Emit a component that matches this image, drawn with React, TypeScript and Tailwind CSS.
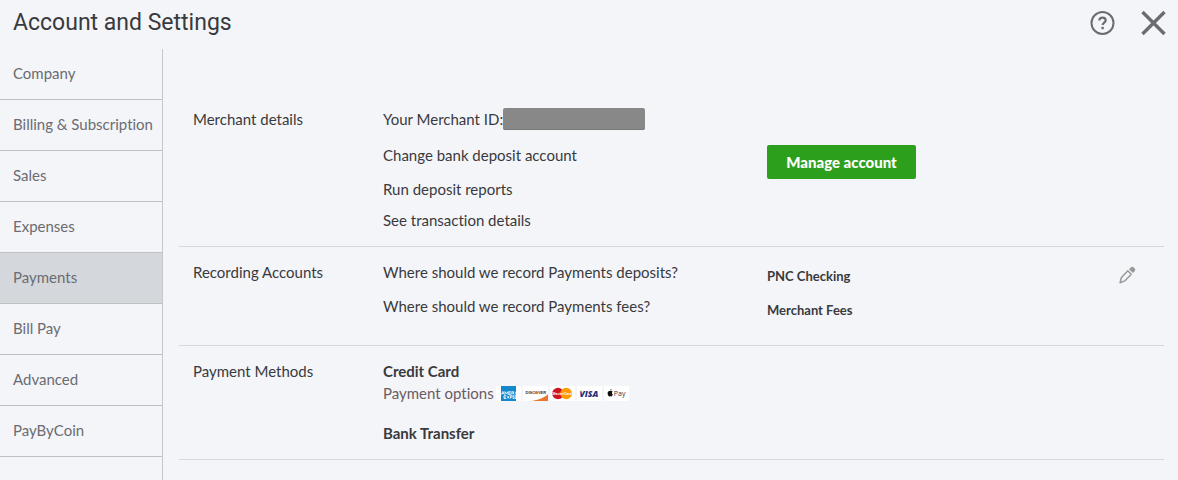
import { useState } from 'react';
import type { ReactNode } from 'react';

const TABS = [
  'Company',
  'Billing & Subscription',
  'Sales',
  'Expenses',
  'Payments',
  'Bill Pay',
  'Advanced',
  'PayByCoin',
];

function HelpIcon() {
  return (
    <svg width="26" height="26" viewBox="0 0 26 26" fill="none" stroke="currentColor" strokeWidth="2">
      <circle cx="13.5" cy="13" r="11" />
      <path d="M10.300 10.600c0-1.900 1.300-2.900 3.200-2.900s3.200 1.100 3.200 2.700c0 2.100-3.100 2.300-3.100 4.700" strokeWidth="2.200" />
      <path d="M12.400 16.800h2.400v2.400h-2.400z" fill="currentColor" stroke="none" />
    </svg>
  );
}

function CloseIcon() {
  return (
    <svg width="26" height="26" viewBox="0 0 26 26" fill="none" stroke="currentColor" strokeWidth="3.400">
      <path d="M2.500 2l22 22M24.500 2l-22 22" />
    </svg>
  );
}

function PencilIcon() {
  return (
    <svg width="18" height="18" viewBox="0 0 18 18" fill="none">
      <path d="M9.800 4.800l3.400 3.400-6.400 6.700-4.700 1.800 1.200-5z" stroke="currentColor" strokeWidth="1.500" strokeLinejoin="round" />
      <path d="M11 3.300l1.500-1.600a2.500 2.500 0 0 1 3.500 0l.4.400a2.500 2.500 0 0 1 0 3.500L14.900 7.100z" fill="currentColor" />
    </svg>
  );
}

function Card({ label, children }: { label: string; children: ReactNode }) {
  return (
    <svg width="25" height="15" viewBox="0 0 25 15" role="img" aria-label={label}>
      <rect width="25" height="15" rx="0.6" fill="#fff" />
      {children}
    </svg>
  );
}

function CardLogos() {
  return (
    <div className="flex gap-0.5">
      <Card label="American Express">
        <rect x="5" width="15" height="15" fill="#1488cc" />
        <g stroke="#fff" fill="none" strokeWidth="0.8">
          <path d="M5.4 8.6l1.5-3.2 1.5 3.2M6 7.6h1.8M9 8.6V5.6l1.4 2 1.4-2v3M15 5.7h-2.2v2.8H15M12.8 7.1h2M15.8 8.6V5.7h1.8v1.4h-1.8M17.4 7.1l.8 1.5M19.8 5.7v2.9" />
          <path d="M10.2 9.7H8v2.8h2.2M8 11.1h2M11 9.6l2.4 3M13.4 9.6l-2.4 3M14.4 12.6V9.7h1.5v1.5h-1.5M18.2 9.7h-1.4v1.4h1.4v1.4h-1.6M20 9.7h-1v1.4h1v1.4h-1" />
        </g>
      </Card>
      <Card label="Discover">
        <path d="M25 8.200V15H7.500C15 14 21 12 25 8.200z" fill="#e8762c" />
        <text x="2.500" y="8" fontSize="4" fontWeight="700" fill="#333" fontFamily="Liberation Sans, sans-serif">DISC</text>
        <circle cx="13.400" cy="6.600" r="1.700" fill="#e8762c" />
        <text x="14.900" y="8" fontSize="4" fontWeight="700" fill="#333" fontFamily="Liberation Sans, sans-serif">VER</text>
      </Card>
      <Card label="MasterCard">
        <circle cx="8" cy="7.500" r="5.800" fill="#cc1423" />
        <circle cx="16.200" cy="7.500" r="5.800" fill="#f90" />
        <text x="12" y="8.800" textAnchor="middle" fontSize="3.500" fontWeight="700" fontStyle="italic" fill="#fff" fontFamily="Liberation Sans, sans-serif">MasterCard</text>
      </Card>
      <Card label="Visa">
        <text x="2.500" y="10.900" fontSize="8.600" fontWeight="800" fontStyle="italic" fill="#262f7d" fontFamily="Open Sans, sans-serif">VISA</text>
        <path d="M2.600 4.800h2.200l.8 2.600z" fill="#e8a33c" />
      </Card>
      <Card label="Apple Pay">
        <path d="M8.900 8.600c-.5 1.300-1.200 2-1.900 1.800-.5-.2-.8-.2-1.300 0-.9.300-2.100-1.400-2.100-3.200 0-1.900 1.500-2.700 2.700-2.100.4.100.7-.2 1.200-.2.600 0 1 .3 1.300.7-1.200.9-1.100 2.400.1 3zM7.600 3c0 .9-.6 1.600-1.400 1.600C6.200 3.700 6.800 3.100 7.600 3z" fill="#111" />
        <text x="9.800" y="9.900" fontSize="7" fill="#333" fontFamily="Open Sans, sans-serif">Pay</text>
      </Card>
    </div>
  );
}

function Section({ title, className, children }: { title: string; className: string; children: ReactNode }) {
  return (
    <section className={`grid grid-cols-[190px_384px_1fr] border-b border-[#d6d8db] pl-3.5 ${className}`}>
      <h2>{title}</h2>
      {children}
    </section>
  );
}

export default function App() {
  const [active, setActive] = useState('Payments');

  return (
    <div className="flex min-h-screen flex-col bg-[#f4f5f9] font-['Lato',sans-serif] text-[15px] leading-5 text-[#393a3d] [font-variant-ligatures:none]">
      <header className="flex h-[49px] items-start justify-between pt-2.5 pr-3 pl-[13px]">
        <h1 className="font-['Roboto',sans-serif] text-[23px] leading-[26px]">Account and Settings</h1>
        <div className="flex items-center gap-[25px] text-[#6b6c72]">
          <button type="button" aria-label="Help"><HelpIcon /></button>
          <button type="button" aria-label="Close"><CloseIcon /></button>
        </div>
      </header>

      <div className="flex flex-1">
        <nav className="w-[163px] shrink-0 border-r border-[#c7c7c7]">
          {TABS.map((tab) => (
            <button
              key={tab}
              type="button"
              onClick={() => setActive(tab)}
              className={`flex h-[51px] w-full items-center border-b border-[#c0c0c0] pb-0.5 pl-[13px] text-left whitespace-nowrap text-[#6b6c72] ${
                tab === active ? 'bg-[#d4d7dc]' : ''
              }`}
            >
              {tab}
            </button>
          ))}
        </nav>

        <main className="flex-1 pt-[59px] pr-3.5 pl-4">
          <Section title="Merchant details" className="pb-[15px] leading-[22px]">
            <div className="flex flex-col items-start">
              <div className="flex items-start">
                Your Merchant ID:
                <span className="h-[22px] w-[142px] rounded-xs border-b border-[#777] bg-[#888]" />
              </div>
              <a href="#bank" className="mt-3.5">Change bank deposit account</a>
              <a href="#reports" className="mt-3">Run deposit reports</a>
              <a href="#transactions" className="mt-[9px]">See transaction details</a>
            </div>
            <div className="pt-[37px]">
              <button type="button" className="h-[34px] w-[149px] rounded-xs bg-[#2ca01c] font-black text-white">
                Manage account
              </button>
            </div>
          </Section>

          <Section title="Recording Accounts" className="pt-[15px] pb-[25px]">
            <div className="flex flex-col gap-3.5">
              <p>Where should we record Payments deposits?</p>
              <p>Where should we record Payments fees?</p>
            </div>
            <div className="flex items-start justify-between pt-1 pr-7">
              <div className="flex flex-col gap-3.5 text-[13px] leading-5 font-bold">
                <p>PNC Checking</p>
                <p>Merchant Fees</p>
              </div>
              <button type="button" aria-label="Edit recording accounts" className="text-[#999]">
                <PencilIcon />
              </button>
            </div>
          </Section>

          <Section title="Payment Methods" className="pt-[15px] pb-4">
            <div>
              <h3 className="font-bold">Credit Card</h3>
              <div className="mt-0.5 flex items-center gap-0.5 text-[#6b5b60]">
                Payment options
                <CardLogos />
              </div>
              <h3 className="mt-5 font-bold">Bank Transfer</h3>
            </div>
          </Section>
        </main>
      </div>
    </div>
  );
}
